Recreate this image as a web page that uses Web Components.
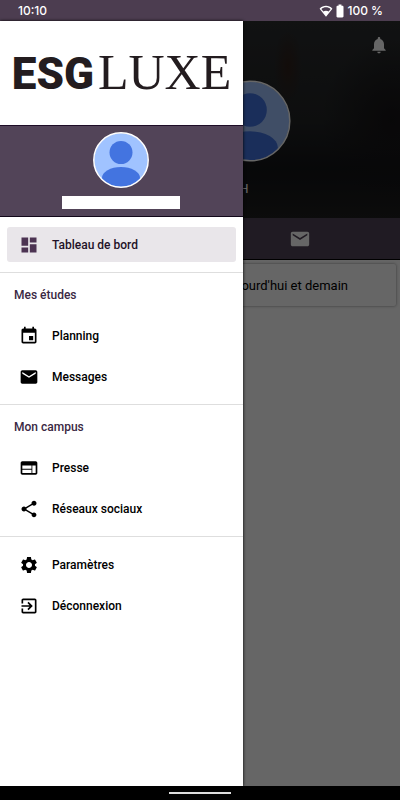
<!DOCTYPE html>
<html lang="fr">
<head>
<meta charset="utf-8">
<meta name="viewport" content="width=device-width">
<title>ESG Luxe</title>
<style>
html,body{margin:0;height:100%;background:#000}
body{font-family:Roboto,"Noto Sans",sans-serif;font-size:12px;color:#000}
</style>
</head>
<body>
<app-shell></app-shell>
<script>
const ICONS = {
  dash:'<path d="M3 13h8V3H3v10zm0 8h8v-6H3v6zm10 0h8V11h-8v10zm0-18v6h8V3h-8z"/>',
  event:'<path d="M17 12h-5v5h5v-5zM16 1v2H8V1H6v2H5c-1.100 0-2 .9-2 2v14c0 1.100.9 2 2 2h14c1.100 0 2-.9 2-2V5c0-1.100-.9-2-2-2h-1V1h-2zm3 18H5V8h14v11z"/>',
  mail:'<path d="M20 4H4c-1.100 0-2 .9-2 2v12c0 1.100.9 2 2 2h16c1.100 0 2-.9 2-2V6c0-1.100-.9-2-2-2zm0 4l-8 5-8-5V6l8 5 8-5v2z"/>',
  web:'<path d="M20 4H4c-1.100 0-2 .9-2 2v12c0 1.100.9 2 2 2h16c1.100 0 2-.9 2-2V6c0-1.100-.9-2-2-2zm-5 14H4v-4h11v4zm0-5H4V9h11v4zm5 5h-4V9h4v9z"/>',
  share:'<path d="M18 16.080c-.76 0-1.440.3-1.960.77L8.910 12.700c.05-.23.09-.46.09-.7s-.04-.47-.09-.7l7.050-4.110c.54.5 1.250.81 2.040.81 1.660 0 3-1.340 3-3s-1.340-3-3-3-3 1.340-3 3c0 .24.04.47.09.7L8.040 9.810C7.500 9.310 6.790 9 6 9c-1.660 0-3 1.340-3 3s1.340 3 3 3c.79 0 1.500-.31 2.040-.81l7.120 4.160c-.05.21-.08.43-.08.65 0 1.610 1.310 2.920 2.920 2.920s2.920-1.310 2.920-2.920-1.310-2.920-2.920-2.920z"/>',
  gear:'<path d="M19.140 12.940c.04-.3.06-.61.06-.94s-.02-.64-.07-.94l2.030-1.580c.18-.14.23-.41.12-.61l-1.920-3.320c-.12-.22-.37-.29-.59-.22l-2.390.96c-.5-.38-1.030-.7-1.620-.94L14.400 2.810c-.04-.24-.24-.41-.48-.41h-3.840c-.24 0-.43.17-.47.41l-.36 2.540c-.59.24-1.130.57-1.620.94l-2.390-.96c-.22-.08-.47 0-.59.22L2.740 8.870c-.12.21-.08.47.12.61l2.030 1.580c-.05.3-.09.63-.09.94s.02.64.07.94l-2.030 1.580c-.18.14-.23.41-.12.61l1.920 3.320c.12.22.37.29.59.22l2.390-.96c.5.38 1.030.7 1.620.94l.36 2.540c.05.24.24.41.48.41h3.840c.24 0 .44-.17.47-.41l.36-2.540c.59-.24 1.130-.56 1.620-.94l2.390.96c.22.08.47 0 .59-.22l1.920-3.320c.12-.22.07-.47-.12-.61l-2.010-1.580zM12 15.600c-1.980 0-3.600-1.620-3.600-3.600s1.620-3.600 3.600-3.600 3.600 1.620 3.600 3.600-1.620 3.600-3.600 3.600z"/>',
  exit:'<path d="M10.090 15.590L11.500 17l5-5-5-5-1.410 1.410L12.670 11H3v2h9.670l-2.580 2.590zM19 3H5c-1.110 0-2 .9-2 2v4h2V5h14v14H5v-4H3v4c0 1.100.89 2 2 2h14c1.100 0 2-.9 2-2V5c0-1.100-.9-2-2-2z"/>',
  bell:'<path d="M12 22c1.100 0 2-.9 2-2h-4c0 1.100.9 2 2 2zm6-6v-5c0-3.070-1.640-5.640-4.500-6.320V4c0-.83-.67-1.500-1.500-1.500s-1.500.67-1.500 1.500v.68C7.630 5.360 6 7.920 6 11v5l-2 2v1h16v-1l-2-2z"/>',
  wifi:'<path fill-rule="evenodd" d="M12 22L1 8C4 4.500 8 3 12 3S20 4.500 23 8L12 22zM12 5.500c-3 0-5.700 1-8 3L7.500 13C8.700 12 10.200 11.500 12 11.500s3.300.5 4.500 1.500L20 8.500c-2.300-2-5-3-8-3z"/>',
  battery:'<path d="M16 3h-1.500V1h-5v2H8C6.700 3 6 3.700 6 5v16c0 1.300.7 2 2 2h8c1.300 0 2-.7 2-2V5c0-1.300-.7-2-2-2z"/>'
};
function define(name, html, setup){
  const t = document.createElement('template');
  t.innerHTML = html;
  customElements.define(name, class extends HTMLElement{
    constructor(){
      super();
      this.attachShadow({mode:'open'}).append(t.content.cloneNode(true));
    }
    connectedCallback(){ if(setup) setup(this, this.shadowRoot); }
  });
}

define('app-icon', `<style>
:host{display:block;flex:none;width:var(--icon,20px);height:var(--icon,20px)}
svg{display:block;width:100%;height:100%;fill:currentColor}
</style><svg viewBox="0 0 24 24" aria-hidden="true"></svg>`,
(el, r) => { r.querySelector('svg').innerHTML = ICONS[el.getAttribute('name')]; });

define('user-avatar', `<style>
:host{display:block;flex:none;width:var(--size,56px);height:var(--size,56px)}
svg{display:block;width:100%;height:100%}
.ring{fill:none;stroke:#fff;stroke-width:var(--ring,1.5px)}
</style><svg viewBox="0 0 56 56" role="img" aria-label="Profil">
<defs><clipPath id="c"><circle cx="28" cy="28" r="27"/></clipPath></defs>
<circle cx="28" cy="28" r="27" fill="#a0c3ff"/>
<g clip-path="url(#c)" fill="#4374e0"><circle cx="28" cy="20.500" r="11.500"/><ellipse cx="28" cy="46" rx="19" ry="11"/></g>
<circle class="ring" cx="28" cy="28" r="27.200"/></svg>`);

define('status-bar', `<style>
:host{display:flex;align-items:center;box-sizing:border-box;height:21px;padding:1px 17px 0 18px;background:#4c3d50;color:#fff;
font:500 12px/20px Inter,sans-serif}
.right{display:flex;align-items:center;margin-left:auto}
app-icon{--icon:14px}
</style><span>10:10</span><span class="right"><app-icon name="wifi"></app-icon><app-icon name="battery"></app-icon><span>100 %</span></span>`);

define('brand-logo', `<style>
:host{display:flex;align-items:baseline;justify-content:center;gap:4px;height:104px;line-height:102px;color:#231c1f;background:#fff;white-space:nowrap;border-bottom:1px solid #1d0d27}
.a{font-family:Roboto,sans-serif;font-weight:900;font-size:44px}
.b{font-family:"Liberation Serif",serif;font-size:50px}
</style><span class="a">ESG</span><span class="b">LUXE</span>`);

define('profile-header', `<style>
:host{display:flex;flex-direction:column;align-items:center;gap:8px;box-sizing:border-box;height:91px;padding-top:6px;padding-right:1px;background:#524458;border-bottom:1px solid #12081a}
.name{width:118px;height:13px;background:#fff}
</style><user-avatar></user-avatar><div class="name"></div>`);

define('nav-item', `<style>
:host{display:block}
a{display:flex;align-items:center;gap:13px;height:35px;padding:0 12px;border-radius:3px;color:#000;text-decoration:none;font-weight:500;line-height:16px}
:host([active]) a{background:#e9e6ea;color:#1f1228}
:host([active]) app-icon{color:#4c3352}
</style><a href="#"><app-icon></app-icon><slot></slot></a>`,
(el, r) => {
  const i = r.querySelector('app-icon');
  i.shadowRoot.querySelector('svg').innerHTML = ICONS[el.getAttribute('icon')];
  i.setAttribute('name', el.getAttribute('icon'));
  if(el.hasAttribute('active')) r.querySelector('a').setAttribute('aria-current','page');
});

define('nav-group', `<style>
:host{display:block}
:host(:not(:first-of-type)){border-top:1px solid #dedede}
h2{margin:0;padding:14px 14px 6px;font-size:12px;line-height:16px;font-weight:500;color:#3a2843}
.items{display:flex;flex-direction:column;gap:6px;padding:10px 7px}
h2:not([hidden]) + .items{padding:9px 7px 10px}
</style><h2></h2><div class="items"><slot></slot></div>`,
(el, r) => {
  const h = r.querySelector('h2'), t = el.getAttribute('heading');
  if(t) h.textContent = t; else { h.hidden = true; h.style.display = 'none'; }
});

define('app-drawer', `<style>
:host{display:block;background:#fff;box-shadow:0 0 3px #000}
</style><brand-logo></brand-logo><profile-header></profile-header><nav>
<nav-group><nav-item icon="dash" active>Tableau de bord</nav-item></nav-group>
<nav-group heading="Mes études"><nav-item icon="event">Planning</nav-item><nav-item icon="mail">Messages</nav-item></nav-group>
<nav-group heading="Mon campus"><nav-item icon="web">Presse</nav-item><nav-item icon="share">Réseaux sociaux</nav-item></nav-group>
<nav-group><nav-item icon="gear">Paramètres</nav-item><nav-item icon="exit">Déconnexion</nav-item></nav-group>
</nav>`);

define('home-page', `<style>
:host{display:flex;flex-direction:column;background:#fff}
button{border:0;background:none;color:#fff;padding:0}
.hero{position:relative;height:197px;display:flex;flex-direction:column;align-items:center;box-sizing:border-box;padding:59px 0 0 25%;gap:18px;color:#fff;
background:radial-gradient(ellipse 14px 36px at 72% 23%,#30201a,transparent),radial-gradient(ellipse 70px 80px at 98% 50%,#161416,transparent),linear-gradient(#2b2d2f,#222425 50%,#131417 75%,#1e1e1e)}
user-avatar{--size:82px;--ring:1px}
.bell{position:absolute;top:14px;right:11px}
.name{font-size:13px;line-height:18px;margin-right:12px}
.tabs{display:flex;height:41px;background:#524458;border-bottom:1px solid #000}
.tabs button{flex:1;display:flex;align-items:center;justify-content:center;--icon:22px}
.card{margin:4px;height:42px;padding-right:48px;display:flex;align-items:center;justify-content:flex-end;background:#fff;border-radius:2px;box-shadow:0 0 3px #888;color:#000;font-size:13px}
</style><div class="hero"><button class="bell" aria-label="Notifications"><app-icon name="bell"></app-icon></button><user-avatar></user-avatar><span class="name">H</span></div>
<div class="tabs"><button aria-label="Planning"><app-icon name="event"></app-icon></button><button aria-label="Messages"><app-icon name="mail"></app-icon></button></div>
<div class="card">Aujourd'hui et demain</div>`);

define('app-shell', `<style>
:host{display:flex;flex-direction:column;min-height:100vh;background:#000}
main{flex:1;position:relative;display:flex}
home-page{flex:1}
.scrim{position:absolute;inset:0;background:rgba(0,0,0,.6)}
app-drawer{position:absolute;top:0;bottom:0;left:0;width:60.75%}
footer{display:flex;justify-content:center;align-items:center;height:14px;background:#000}
footer div{width:62px;height:2px;background:#ddd}
</style><status-bar></status-bar><main><home-page></home-page><div class="scrim"></div><app-drawer></app-drawer></main><footer><div></div></footer>`);
</script>
</body>
</html>
